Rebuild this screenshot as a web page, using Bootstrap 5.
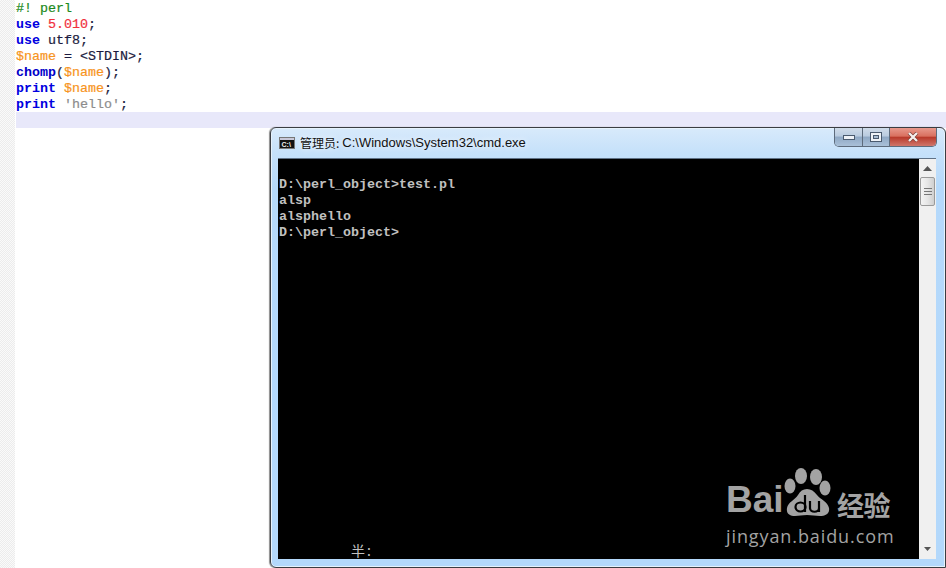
<!DOCTYPE html>
<html lang="zh">
<head>
<meta charset="utf-8">
<title>perl</title>
<link href="https://cdn.jsdelivr.net/npm/bootstrap@5.3.0/dist/css/bootstrap.min.css" rel="stylesheet">
<style>
html,body{height:100%;margin:0;overflow:hidden;background:#fff}
.stage{width:946px;height:568px;position:relative;overflow:hidden;background:#fff}
.gutter{width:15px;background:#f1f1f1;background-image:repeating-conic-gradient(#ececec 0 25%,#fafafa 0 50%);background-size:2px 2px;flex:none}
.editor{padding-left:1px}
.cl{font:13.33px/16px "Liberation Mono",monospace;height:16px;white-space:pre;color:#1c1c40;-webkit-text-stroke:.2px currentColor;position:relative;top:1px}
.curline{background:#e8e8fa;top:0}
.kw{color:#0000e0;font-weight:700;-webkit-text-stroke:0}
.cm{color:#1b8a1b}
.nm{color:#f0303c}
.dollar{color:#f7941d}
.st{color:#8c8c8c}
.fn{color:#0000c8;font-weight:700;-webkit-text-stroke:0}
.win{position:absolute;left:270px;top:127px;width:676px;height:441px;border:1px solid #3a3d42;border-radius:6px 6px 0 6px;background:linear-gradient(#d8eafb 0,#c6e1fa 24px,#b5d9fb 60px,#b3d8fb 100%);box-shadow:inset 0 0 0 1px #e6f2fc,-1px 0 1px #8a8a8a;padding:0 9px 8px 7px}
.tbar{height:30px;color:#111;gap:5px;padding-left:1px}
.tcn{font:12px/30px "Noto Sans CJK SC",sans-serif;text-shadow:0 0 6px #fff}
.tpath{font:13px/30px "Liberation Sans",sans-serif;text-shadow:0 0 6px #fff;margin-left:-2px}
.cbtns{position:absolute;top:0;right:8px;width:103px;height:19px;border:1px solid #5d6b7c;border-top:0;border-radius:0 0 5px 5px;overflow:hidden}
.cbtn{height:100%;border-right:1px solid #5d6b7c;background:linear-gradient(#cfdbe9 0,#b9cbdf 45%,#8fa8c4 50%,#a9c0d8 100%)}
.bmin{width:28px}.bmax{width:27px}
.bclose{flex:1;border-right:0;background:linear-gradient(#e8998d 0,#d9705f 45%,#b93a2b 52%,#d0766b 100%)}
.conswrap{height:401px;border-top:1px solid #5f7186}
.cons{flex:1;background:#000;color:#c0c0c0;padding:18px 0 0 1px;font:700 13.33px/16px "Liberation Mono",monospace;white-space:pre;position:relative}
.imeb{position:absolute;left:73px;bottom:1px;font:400 14px/16px "Noto Sans CJK SC",sans-serif;color:#c0c0c0;display:flex;gap:2px}
.sb{width:17px;flex:none;background:#f0f0f0;align-items:center;position:relative}
.sbup{margin-top:7px}
.thumb{position:absolute;left:1px;top:18px;width:15px;height:29px;border:1px solid #9a9a9a;border-radius:2px;background:linear-gradient(90deg,#f4f4f4,#e6e6e6 50%,#cfcfcf)}
.arrowdn{position:absolute;bottom:0}
.wm{position:absolute;left:726px;top:465px;color:#a3a3a3;width:180px}
.wm1{font:700 37px/36px "Liberation Sans",sans-serif;margin-bottom:-1px;width:58px}
.wmrow{align-items:flex-end;height:52px}
.wmcn{font:700 27px/30px "Noto Sans CJK SC",sans-serif;letter-spacing:-.5px;margin:0 0 -3px 3px}
.wmurl{font:18px/22px "Open Sans",sans-serif;letter-spacing:.9px;margin-top:8px;white-space:nowrap}
</style>
</head>
<body>
<div class="stage d-flex">
  <div class="gutter"></div>
  <div class="editor flex-grow-1">
    <div class="cl cm">#! perl</div>
    <div class="cl"><span class="kw">use</span> <span class="nm">5.010</span>;</div>
    <div class="cl"><span class="kw">use</span> utf8;</div>
    <div class="cl"><span class="dollar">$name</span> = &lt;STDIN&gt;;</div>
    <div class="cl"><span class="fn">chomp</span>(<span class="dollar">$name</span>);</div>
    <div class="cl"><span class="kw">print</span> <span class="dollar">$name</span>;</div>
    <div class="cl"><span class="kw">print</span> <span class="st">'hello'</span>;</div>
    <div class="cl curline"></div>
  </div>

  <div class="win">
    <div class="tbar d-flex align-items-center">
      <svg width="16" height="12" viewBox="0 0 16 12" aria-hidden="true"><rect x=".5" y=".5" width="15" height="11" fill="#111" stroke="#777"/><rect x="1" y="1" width="14" height="2" fill="#c8c8d8"/><text x="2.500" y="9.500" font-family="Liberation Sans" font-weight="700" font-size="7" fill="#eee">C:\</text></svg>
      <span class="tcn">管理员:</span><span class="tpath">C:\Windows\System32\cmd.exe</span>
    </div>
    <div class="cbtns d-flex">
      <div class="cbtn bmin d-flex align-items-center justify-content-center"><svg width="12" height="5" aria-hidden="true"><rect x=".5" y=".5" width="11" height="4" fill="#eef2f7" stroke="#4a5a6e"/></svg></div>
      <div class="cbtn bmax d-flex align-items-center justify-content-center"><svg width="12" height="10" aria-hidden="true"><rect x=".5" y=".5" width="11" height="9" fill="#eef2f7" stroke="#4a5a6e"/><rect x="3.500" y="3.500" width="5" height="3" fill="#a9bdd3" stroke="#4a5a6e"/></svg></div>
      <div class="cbtn bclose d-flex align-items-center justify-content-center"><svg width="12" height="10" viewBox="0 0 12 10" aria-hidden="true"><path d="M2 1l8 8M10 1L2 9" stroke="#7a3a34" stroke-width="3.600"/><path d="M2 1l8 8M10 1L2 9" stroke="#f4f0ee" stroke-width="2.400"/></svg></div>
    </div>
    <div class="conswrap d-flex">
      <div class="cons">D:\perl_object&gt;test.pl
alsp
alsphello
D:\perl_object&gt;<div class="imeb"><span>半</span><span>:</span></div></div>
      <div class="sb d-flex flex-column">
        <svg class="sbup" width="9" height="5" viewBox="0 0 9 5" aria-hidden="true"><path d="M4.500 0L9 5H0z" fill="#555"/></svg>
        <div class="thumb d-flex flex-column align-items-center justify-content-center">
          <svg width="8" height="8" viewBox="0 0 8 8" aria-hidden="true"><path d="M0 .5h8M0 3.500h8M0 6.500h8" stroke="#777" fill="none"/></svg>
        </div>
        <svg class="arrowdn mb-2" width="7" height="4" viewBox="0 0 7 4" aria-hidden="true"><path d="M0 0h7L3.500 4z" fill="#555"/></svg>
      </div>
    </div>
  </div>

  <div class="wm">
    <div class="d-flex wmrow">
      <span class="wm1">Bai</span>
      <svg width="50" height="52" viewBox="0 0 50 52" aria-hidden="true">
        <ellipse cx="17" cy="11" rx="6" ry="8" fill="#a3a3a3"/><ellipse cx="32" cy="12" rx="6" ry="8" fill="#a3a3a3"/>
        <ellipse cx="6" cy="21" rx="5.500" ry="7.500" fill="#a3a3a3"/><ellipse cx="41" cy="23" rx="5.500" ry="7.500" fill="#a3a3a3"/>
        <path d="M23 24c4 0 7 2 10 6c3 4 11 7 12 13c1 6-4 8-9 8c-5 0-8-1-13-1c-5 0-8 1-12 1c-5 0-9-2-8-8c1-6 8-8 11-13c2-4 5-6 9-6z" fill="#a3a3a3"/>
        <ellipse cx="16.500" cy="42" rx="5" ry="4.500" fill="none" stroke="#000" stroke-width="2.200"/>
        <path d="M21 30v17M26 36v7c0 5 9 5 9 0v-7M35 36v11" fill="none" stroke="#000" stroke-width="2.200"/>
      </svg>
      <span class="wmcn">经验</span>
    </div>
    <div class="wmurl">jingyan.baidu.com</div>
  </div>
</div>
<script src="https://cdn.jsdelivr.net/npm/bootstrap@5.3.0/dist/js/bootstrap.bundle.min.js"></script>
</body>
</html>
